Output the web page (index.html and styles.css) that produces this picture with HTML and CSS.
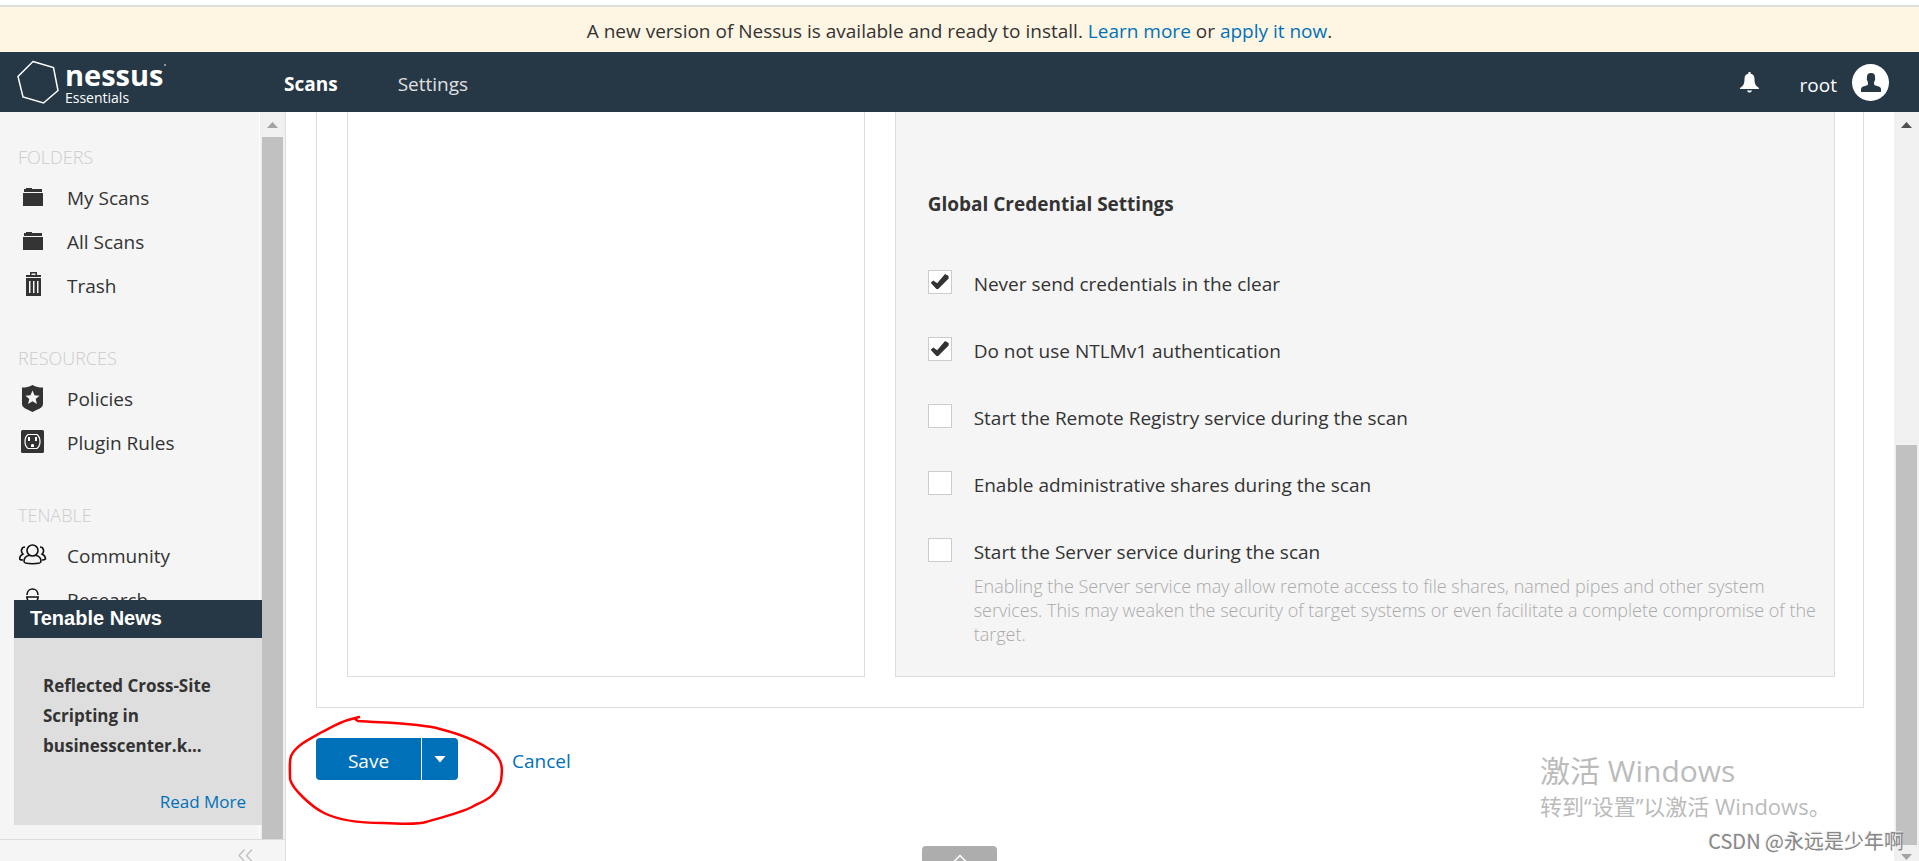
FILE: index.html
```html
<!DOCTYPE html>
<html lang="en">
<head>
    <meta charset="UTF-8">
    <meta name="viewport" content="width=device-width, initial-scale=1.0">
    <title>Nessus Essentials / Scans</title>
    <link rel="stylesheet" href="styles.css">
</head>
<body>
    <div class="notice">
        <p>A new version of Nessus is available and ready to install. <a href="#">Learn more</a> or <a href="#">apply it now</a>.</p>
    </div>

    <header class="topbar">
        <a class="logo" href="#">
            <svg class="logo-mark" viewBox="0 0 42 44" width="42" height="44">
                <path d="M16 1.500L36.500 7.500L41 30.500L26.500 43L6 37L1 16.500Z" fill="none" stroke="#fff" stroke-width="1.500"/>
            </svg>
            <span class="logo-text">
                <span class="logo-name">nessus</span>
                <span class="logo-edition">Essentials</span>
            </span>
            <span class="logo-dot"></span>
        </a>
        <nav class="tabs">
            <a class="tab active" href="#">Scans</a>
            <a class="tab" href="#">Settings</a>
        </nav>
        <div class="user">
            <button class="bell" aria-label="Notifications">
                <svg viewBox="0 0 19 21" width="19" height="21" fill="#fff">
                    <path d="M8.500 0h2v1.500C13 2 14.500 4 14.500 6.500c0 5 1 6.500 2.500 8 1.500.8 2 1.500 2 2.500H0c0-1 .5-1.700 2-2.500 1.500-1.500 2.500-3 2.500-8C4.500 4 6 2 8.500 1.500zM7 18.500h5c-.5 1.500-1.500 2-2.500 2s-2-.5-2.500-2z"/>
                </svg>
            </button>
            <span class="user-name">root</span>
            <button class="avatar" aria-label="Account">
                <svg viewBox="0 0 20 19" width="20" height="19" fill="#263746">
                    <path d="M10 0c3 0 4 1.500 4 4 0 1 .5 1.500 0 3-.4 1-1 2-1 3.500 0 1.500 1 2 3 2.500 3 .8 4 1.500 4 3.500V19H0v-2.500c0-2 1-2.700 4-3.500 2-.5 3-1 3-2.500C7 9 6.400 8 6 7c-.5-1.500 0-2 0-3 0-2.500 1-4 4-4z"/>
                </svg>
            </button>
        </div>
    </header>

    <div class="page">
        <aside class="sidebar">
            <div class="sidebar-scroll">
                <div class="menu">
                    <section class="menu-group">
                        <h3>FOLDERS</h3>
                        <a class="menu-item" href="#">
                            <svg viewBox="0 0 28 28" width="28" height="28" fill="#333"><path d="M5 5h2V4h6v1h10v3H5zM4 9h20v13H4z"/></svg>
                            <span>My Scans</span>
                        </a>
                        <a class="menu-item" href="#">
                            <svg viewBox="0 0 28 28" width="28" height="28" fill="#333"><path d="M5 5h2V4h6v1h10v3H5zM4 9h20v13H4z"/></svg>
                            <span>All Scans</span>
                        </a>
                        <a class="menu-item" href="#">
                            <svg viewBox="0 0 28 28" width="28" height="28" fill="#333"><path fill-rule="evenodd" d="M11 0h7v3h4v2H7V3h4zm1.500 1.500V3h4V1.500zM7 6h15v18H7zm3 3v12h1.500V9zm4 0v12h1.500V9zm4 0v12h1.500V9z"/></svg>
                            <span>Trash</span>
                        </a>
                    </section>
                    <section class="menu-group">
                        <h3>RESOURCES</h3>
                        <a class="menu-item" href="#">
                            <svg viewBox="0 0 28 28" width="28" height="28" fill="#333"><path fill-rule="evenodd" d="M13.500 0C17 2 20 2.500 24 2.500V19c0 4-5 5-10.500 8C8 24 3 23 3 19V2.500C7 2.500 10 2 13.500 0zm0 5.500l-2 4.800-5 .4 3.800 3.300-1.200 5 4.400-2.700 4.400 2.700-1.200-5 3.800-3.300-5-.4z"/></svg>
                            <span>Policies</span>
                        </a>
                        <a class="menu-item" href="#">
                            <svg viewBox="0 0 28 28" width="28" height="28"><rect x="2" y="1" width="23" height="23" rx="1.500" fill="#333"/><path d="M9 5.500h9c2 1.500 3 4 3 7s-1 5.500-3 7H9c-2-1.500-3-4-3-7s1-5.500 3-7z" fill="none" stroke="#fff" stroke-width="1.200"/><path d="M9 8h2v4H9zM16 8h2v4h-2zM12 18v-2c0-1.500 3-1.500 3 0v2z" fill="#fff"/></svg>
                            <span>Plugin Rules</span>
                        </a>
                    </section>
                    <section class="menu-group">
                        <h3>TENABLE</h3>
                        <a class="menu-item" href="#">
                            <svg viewBox="0 0 28 28" width="28" height="28" fill="none" stroke="#111" stroke-width="1.600"><circle cx="13.500" cy="8.500" r="5.500"/><path d="M10 13.500c-3 .5-5 3-5 6 0 3 17 3 17 0 0-3-2-5.500-5-6M6 5c-4 0-4.500 5-2 7-2 1-3.500 3-3.500 5 1 1 2 1 3.500 1M21 5c4 0 4.500 5 2 7 2 1 3.500 3 3.500 5-1 1-2 1-3.500 1"/></svg>
                            <span>Community</span>
                        </a>
                        <a class="menu-item" href="#">
                            <svg viewBox="0 0 28 28" width="28" height="28" fill="none" stroke="#111" stroke-width="1.600"><path d="M8 9c0-8 11-8 11 0M7 11h13M8 11c0 8 11 8 11 0M3 26c0-7 21-7 21 0"/></svg>
                            <span>Research</span>
                        </a>
                    </section>
                </div>
                <div class="scrollbar">
                    <span class="arrow up muted"></span>
                    <span class="thumb"></span>
                </div>
                <div class="news">
                    <h2>Tenable News</h2>
                    <div class="news-body">
                        <p>Reflected Cross-Site Scripting in businesscenter.k...</p>
                        <a href="#">Read More</a>
                    </div>
                </div>
            </div>
            <div class="sidebar-foot">
                <button class="collapse" aria-label="Collapse menu">
                    <svg viewBox="0 0 15 13" width="15" height="13" fill="none" stroke="#bbb" stroke-width="1.200"><path d="M6.500 .5L1 6.500l5.500 6M14 .5l-5.500 6 5.500 6"/></svg>
                </button>
            </div>
        </aside>

        <main class="content">
            <form class="editor">
                <div class="panel">
                    <div class="list-box"></div>
                    <fieldset class="settings-box">
                        <h4>Global Credential Settings</h4>
                        <div class="options">
                            <label class="option"><input type="checkbox" checked><span>Never send credentials in the clear</span></label>
                            <label class="option"><input type="checkbox" checked><span>Do not use NTLMv1 authentication</span></label>
                            <label class="option"><input type="checkbox"><span>Start the Remote Registry service during the scan</span></label>
                            <label class="option"><input type="checkbox"><span>Enable administrative shares during the scan</span></label>
                            <label class="option"><input type="checkbox"><span>Start the Server service during the scan</span></label>
                        </div>
                        <p class="hint">Enabling the Server service may allow remote access to file shares, named pipes and other system services. This may weaken the security of target systems or even facilitate a complete compromise of the target.</p>
                    </fieldset>
                </div>
                <div class="actions">
                    <button type="button" class="save">Save</button>
                    <button type="button" class="save-more" aria-label="More save options"></button>
                    <a class="cancel" href="#">Cancel</a>
                    <svg class="pen-mark" viewBox="0 0 220 112" width="220" height="112" fill="none" stroke="#f00" stroke-width="2.500" stroke-linecap="round" stroke-linejoin="round">
                        <path d="M71 3L60 6C52 8 42 14 34 18C22 25 8 31 3 42C1 48 2 55 2 65C4 75 24 93 36 99C52 107 75 109 95 109C115 110 132 110 138 108C148 105 175 98 184 93C197 86 207 84 213 67C214 58 215 52 211 45C203 31 172 20 152 15C130 9 95 9 70 7L67 5"/>
                    </svg>
                </div>
            </form>
            <button class="drawer" aria-label="Open drawer">
                <svg viewBox="0 0 16 9" width="16" height="9" fill="none" stroke="#fff" stroke-width="1.500"><path d="M1 8.500L8 1.500l7 7"/></svg>
            </button>
        </main>
        <div class="scrollbar page-scroll">
            <span class="arrow up"></span>
            <span class="thumb"></span>
            <span class="arrow down muted"></span>
        </div>
    </div>

    <div class="activate" lang="zh-CN">
        <p class="activate-title">激活 Windows</p>
        <p class="activate-text">转到“设置”以激活 Windows。</p>
    </div>
    <div class="credit" lang="zh-CN">CSDN @永远是少年啊</div>
</body>
</html>
```
FILE: styles.css
```css
* {
    box-sizing: border-box;
}
body {
    font-family: 'Open Sans', 'Noto Sans', sans-serif;
    font-size: 19px;
    line-height: 24px;
    color: #333;
    background: #fff;
    display: flex;
    flex-direction: column;
    height: 100vh;
    margin: 0;
    overflow: hidden;
}
h2, h3, h4, p {
    margin: 0;
}
a {
    color: #0071b9;
    text-decoration: none;
}
button {
    border: none;
    padding: 0;
    background: none;
    font: inherit;
    cursor: pointer;
}
svg {
    display: block;
}

/* top notice */
.notice {
    flex: none;
    height: 47px;
    margin-top: 5px;
    padding-top: 12px;
    border-top: 2px solid #dcdfdc;
    background: #fef6e3;
    text-align: center;
}

/* header */
.topbar {
    flex: none;
    display: flex;
    align-items: center;
    height: 60px;
    padding: 0 30px 0 17px;
    background: #263746;
    color: #fff;
}
.logo {
    display: flex;
    align-items: center;
    width: 267px;
    color: #fff;
}
.logo-text {
    display: flex;
    flex-direction: column;
    margin: 2px 0 0 6px;
}
.logo-name {
    font-size: 29px;
    font-weight: 700;
    line-height: 30px;
}
.logo-edition {
    font-size: 14px;
    line-height: 16px;
}
.logo-dot {
    align-self: flex-start;
    width: 2px;
    height: 2px;
    margin-top: 6px;
    background: #8d969e;
}
.tabs {
    display: flex;
    gap: 60px;
    padding-top: 4px;
}
.tab {
    color: #e0e0e0;
}
.tab.active {
    color: #fff;
    font-weight: 700;
}
.user {
    display: flex;
    align-items: center;
    margin-left: auto;
}
.user-name {
    margin: 6px 15px 0 41px;
}
.avatar {
    display: flex;
    align-items: center;
    justify-content: center;
    width: 37px;
    height: 37px;
    border-radius: 50%;
    background: #fff;
}

/* columns under the header */
.page {
    flex: 1;
    display: flex;
    min-height: 0;
}
.sidebar {
    flex: none;
    display: flex;
    flex-direction: column;
    width: 286px;
    border-right: 1px solid #ddd;
    background: #f5f5f5;
}
.sidebar-scroll {
    position: relative;
    flex: 1;
    display: flex;
    min-height: 0;
    overflow: hidden;
}
.menu {
    flex: 1;
    padding: 33px 0 0 18px;
    border-right: 1px solid #fff;
}
.menu-group {
    margin-bottom: 38px;
}
.menu-group h3 {
    margin-bottom: 7px;
    color: #ccc;
    font-size: 18px;
    font-weight: 300;
}
.menu-item {
    display: flex;
    align-items: center;
    height: 44px;
    color: #333;
}
.menu-item svg {
    margin: 0 20px 0 1px;
}
.scrollbar {
    flex: none;
    display: flex;
    flex-direction: column;
    width: 25px;
    padding: 0 2px;
    background: #f0f0f0;
}
.scrollbar .thumb {
    flex: 1;
    background: #c1c1c1;
}
.arrow {
    flex: none;
    height: 25px;
    background: #505050;
    clip-path: polygon(5px 16px, 16px 16px, 50% 10px);
}
.arrow.down {
    height: 16px;
    clip-path: polygon(5px 9px, 16px 9px, 50% 15px);
}
.arrow.muted {
    background: #a3a3a3;
}
.page-scroll .up {
    margin-bottom: 308px;
}

/* news card lies over the menu */
.news {
    position: absolute;
    left: 14px;
    right: 23px;
    bottom: 14px;
    background: #dedede;
}
.news h2 {
    padding: 6px 16px 8px;
    background: #263746;
    color: #fff;
    font-family: 'Liberation Sans', sans-serif;
    font-size: 20px;
    line-height: 24px;
}
.news-body {
    display: flex;
    flex-direction: column;
    padding: 33px 16px 11px 29px;
    font-size: 17px;
}
.news-body p {
    margin-bottom: 29px;
    font-weight: 700;
    line-height: 30px;
}
.news-body a {
    align-self: flex-end;
}
.sidebar-foot {
    flex: none;
    display: flex;
    justify-content: flex-end;
    height: 22px;
    padding: 9px 32px 0;
    border-top: 1px solid #ddd;
}

/* scan editor */
.content {
    flex: 1;
    position: relative;
    padding: 0 30px;
}
.panel {
    display: grid;
    grid-template-columns: 518fr 941fr;
    gap: 30px;
    padding: 0 28px 30px 30px;
    border: 1px solid #ddd;
    border-top: none;
}
.list-box {
    border: 1px solid #ddd;
    border-top: none;
}
.settings-box {
    min-width: 0;
    margin: 0;
    padding: 80px 12px 30px 32px;
    border: 1px solid #ddd;
    border-top: none;
    background: #f5f5f5;
}
.settings-box h4 {
    margin-bottom: 54px;
    font-size: 19px;
    font-weight: 700;
}
.options {
    display: flex;
    flex-direction: column;
    gap: 43px;
}
.option {
    display: flex;
    gap: 22px;
    height: 24px;
}
.option span {
    margin-top: 2px;
}
.option input {
    appearance: none;
    width: 24px;
    height: 24px;
    margin: 0;
    border: 1px solid #ccc;
    background: #fff;
}
.option input:checked::before {
    content: '';
    display: block;
    width: 18px;
    height: 16px;
    margin: 3px 2px;
    background: #333;
    clip-path: polygon(0 55%, 15% 40%, 36% 58%, 80% 0, 100% 12%, 100% 28%, 42% 94%, 32% 94%);
}
.hint {
    margin: 12px 0 0 46px;
    color: #aaa;
    font-size: 18px;
    font-weight: 300;
}
.actions {
    position: relative;
    display: flex;
    align-items: center;
    margin-top: 30px;
}
.save, .save-more {
    height: 42px;
    background: #0071b9;
    color: #fff;
}
.save {
    width: 105px;
    padding-top: 4px;
    border-radius: 4px 0 0 4px;
}
.save-more {
    width: 36px;
    margin-left: 1px;
    border-radius: 0 4px 4px 0;
}
.save-more::before {
    content: '';
    display: block;
    width: 12px;
    height: 7px;
    margin: 0 auto;
    background: #fff;
    clip-path: polygon(0 0, 100% 0, 50% 100%);
}
.cancel {
    margin: 4px 0 0 54px;
}

/* hand-drawn loop around the save button */
.pen-mark {
    position: absolute;
    left: -28px;
    top: -24px;
}
.drawer {
    position: absolute;
    left: 50%;
    bottom: 0;
    display: flex;
    justify-content: center;
    width: 75px;
    height: 15px;
    margin-left: -168px;
    padding-top: 8px;
    border-radius: 4px 4px 0 0;
    background: #adadad;
}

/* desktop overlays */
.activate {
    position: absolute;
    right: 95px;
    bottom: 40px;
    width: 284px;
    color: #bbb;
    font-family: 'Open Sans', 'Noto Sans CJK SC', sans-serif;
    white-space: nowrap;
}
.activate-title {
    font-size: 30px;
    line-height: 40px;
}
.activate-text {
    font-size: 22px;
    line-height: 30px;
}
.credit {
    position: absolute;
    right: 15px;
    bottom: 7px;
    color: #888;
    font-family: 'Noto Sans CJK SC', sans-serif;
    font-size: 20px;
    line-height: 26px;
    text-shadow: -1px -1px 0 #eee;
}
```
